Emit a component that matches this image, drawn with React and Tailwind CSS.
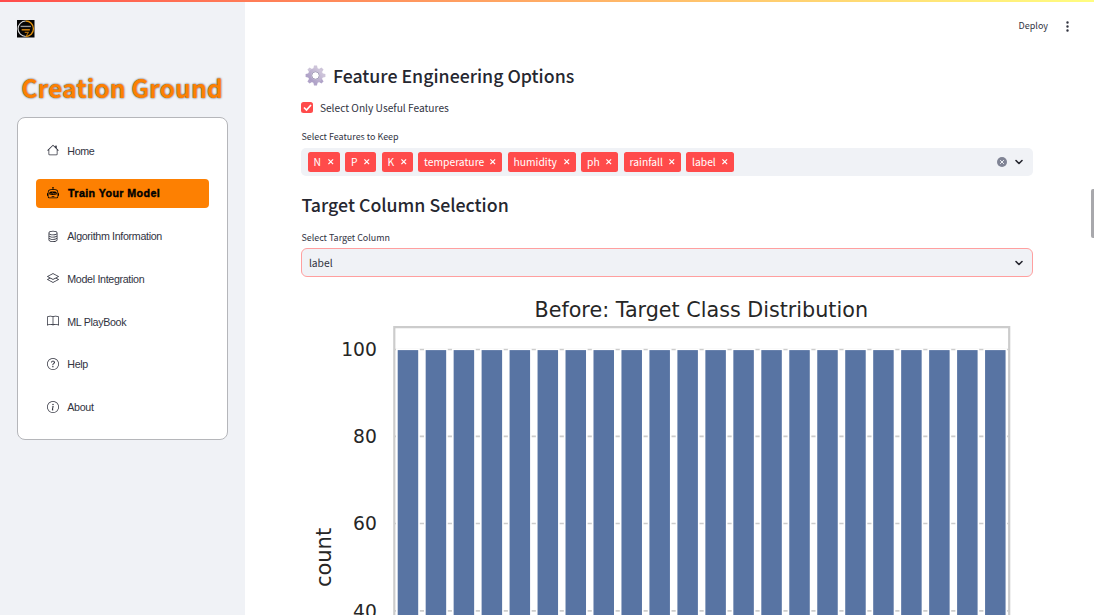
import React from "react";
import { BsHouse, BsRobot, BsDatabase, BsLayers, BsBook, BsQuestionCircle, BsInfoCircle, BsThreeDotsVertical } from "react-icons/bs";

const NAV = [
  { label: "Home", Icon: BsHouse },
  { label: "Train Your Model", Icon: BsRobot, active: true },
  { label: "Algorithm Information", Icon: BsDatabase },
  { label: "Model Integration", Icon: BsLayers },
  { label: "ML PlayBook", Icon: BsBook },
  { label: "Help", Icon: BsQuestionCircle },
  { label: "About", Icon: BsInfoCircle },
];

const FEATURES = [
  { name: "N", width: "w-[32px]" },
  { name: "P", width: "w-[31px]" },
  { name: "K", width: "w-[31px]" },
  { name: "temperature", width: "w-[84px]" },
  { name: "humidity", width: "w-[68px]" },
  { name: "ph", width: "w-[37px]" },
  { name: "rainfall", width: "w-[57px]" },
  { name: "label", width: "w-[48px]" },
];

function Logo() {
  return (
    <svg className="size-[17.500px]" viewBox="0 0 34 34">
      <rect width="34" height="34" fill="#050505" />
      <path d="M17 2a15 15 0 0 0 0 30" fill="none" stroke="#d6d6d6" strokeWidth="2.200" />
      <path d="M17 2a15 15 0 0 1 0 30" fill="none" stroke="#e0920f" strokeWidth="2.600" />
      <path d="M7 12.500h20" stroke="#999999" strokeWidth="2.600" />
      <path d="M9 19h16" stroke="#c57a0c" strokeWidth="3.200" />
      <path d="M15 24h7l-4 7" fill="none" stroke="#a8690c" strokeWidth="2.200" />
    </svg>
  );
}

function Gear() {
  const teeth = [0, 45, 90, 135, 180, 225, 270, 315];
  return (
    <svg className="size-[21px]" viewBox="-12 -12 24 24">
      <defs>
        <linearGradient id="gear" x1="1" y1="0" x2="0" y2="1">
          <stop offset="0" stopColor="#d3cadd" />
          <stop offset="1" stopColor="#a99bc4" />
        </linearGradient>
      </defs>
      {teeth.map((a) => (
        <path key={a} d="M-2.600-7.500L-1.700-11.300h3.400L2.600-7.500z" fill={a > 90 && a < 300 ? "#b0a3c8" : "#cdc4d9"} transform={`rotate(${a})`} />
      ))}
      <circle r="6.600" fill="none" stroke="url(#gear)" strokeWidth="4" />
      <circle r="4.300" fill="none" stroke="#948bab" strokeWidth="1" />
    </svg>
  );
}

function Chevron() {
  return (
    <svg className="size-[8px]" viewBox="0 0 8 8" fill="none" stroke="#262730" strokeWidth="1.600" strokeLinecap="round" strokeLinejoin="round">
      <path d="M1 2.500L4 5.500L7 2.500" />
    </svg>
  );
}

function Cross({ className }) {
  return (
    <svg className={className} viewBox="0 0 8 8" fill="none" stroke="currentColor" strokeWidth="1.300">
      <path d="M1.500 1.500L6.500 6.500M6.500 1.500L1.500 6.500" />
    </svg>
  );
}

function Chart() {
  const bars = Array.from({ length: 22 }, (_, i) => 96.2 + i * 27.97);
  const ticks = [
    { value: 100, y: 59.5 },
    { value: 80, y: 146.300 },
    { value: 60, y: 233.500 },
    { value: 40, y: 320.800 },
  ];
  return (
    <svg className="block h-[325px] w-[732px] shrink-0" viewBox="-0.5 0 732 325" fontFamily="DejaVu Sans" fill="#262626">
      <text x="233" y="27" fontSize="21" textLength="333.500" lengthAdjust="spacingAndGlyphs">Before: Target Class Distribution</text>
      <text x="29.300" y="267.500" fontSize="21" textAnchor="middle" transform="rotate(-90 29.3 267.5)">count</text>
      {ticks.map((t) => (
        <g key={t.value}>
          <text x="75.300" y={t.y + 6.900} fontSize="18.700" textAnchor="end">{t.value}</text>
          <path d={`M93 ${t.y}H707`} stroke="#cccccc" strokeWidth="1.700" />
        </g>
      ))}
      {bars.map((x) => (
        <g key={x}>
          <rect x={x - 1.7} y="58.400" width="23.800" height="280" fill="#ffffff" />
          <rect x={x} y="60.100" width="20.500" height="280" fill="#5874a3" />
        </g>
      ))}
      <path d="M92.800 340V37.100H707.700V340" fill="none" stroke="#cccccc" strokeWidth="2.200" />
    </svg>
  );
}

export default function App() {
  return (
    <div className="relative flex h-[615px] w-[1094px] overflow-hidden bg-white font-['Noto_Sans_CJK_SC',sans-serif] text-[#31333f]">
      <div className="absolute inset-x-0 top-0 h-[2px] bg-linear-to-r from-[#ff4b4b] to-[#fffd80]" />
      <aside className="flex w-[245px] shrink-0 flex-col bg-[#f0f2f6] pl-[17px] pt-[20px]">
        <Logo />
        <h1 className="mt-[29.500px] h-[40px] w-[210px] whitespace-nowrap text-center text-[24.800px] font-bold leading-[40px] text-[#fc8003] [text-shadow:0_0_2px_#333]">
          Creation Ground
        </h1>
        <nav className="mt-[9.500px] flex h-[323px] w-[210.500px] flex-col gap-[14.100px] rounded-[8px] border border-[#b5b6ba] bg-white px-[18px] pt-[18.700px] font-['Liberation_Sans',sans-serif]">
          {NAV.map(({ label, Icon, active }) => (
            <a
              key={label}
              className={
                active
                  ? "flex h-[28.700px] shrink-0 items-center gap-[9px] rounded-[4px] bg-[#fd8002] pl-[11px] text-[10.700px] font-black tracking-[0.400px] text-black [-webkit-text-stroke:0.400px_black]"
                  : "flex h-[28.700px] shrink-0 items-center gap-[8.300px] pl-[11px] text-[10.700px] tracking-[-0.330px] text-[#31333f]"
              }
            >
              <Icon className="-mt-[1px] size-[12px]" />
              <span className="whitespace-nowrap">{label}</span>
            </a>
          ))}
        </nav>
      </aside>
      <main className="flex min-w-0 flex-1 flex-col">
        <header className="flex h-[52px] shrink-0 items-center justify-end pr-[20px] text-[9px]">
          <span className="-mt-[1px]">Deploy</span>
          <BsThreeDotsVertical className="ml-[13px] size-[13px]" />
        </header>
        <div className="flex w-[788.400px] flex-col pl-[56.400px]">
          <div className="mt-[8px] flex h-[30px] items-center gap-[6.500px] pl-[4px]">
            <Gear />
            <h2 className="whitespace-nowrap text-[17.750px] font-medium text-[#262730]">Feature Engineering Options</h2>
          </div>
          <label className="mt-[9px] flex h-[18px] items-center gap-[7px] text-[10.200px]">
            <span className="-mt-[1px] flex size-[11.500px] items-center justify-center rounded-[2.500px] bg-[#ff4b4b]">
              <svg className="size-[9px]" viewBox="0 0 9 9" fill="none" stroke="white" strokeWidth="1.700">
                <path d="M1 4.500L3.500 7L8 2" />
              </svg>
            </span>
            <span>Select Only Useful Features</span>
          </label>
          <p className="mt-[11px] h-[18px] text-[8.950px] leading-[18px]">Select Features to Keep</p>
          <div className="mt-[2px] flex h-[28px] items-center gap-[5.500px] rounded-[5px] bg-[#f0f2f6] pl-[6.200px] pr-[10.200px]">
            {FEATURES.map(({ name, width }) => (
              <span key={name} className={`flex h-[20px] shrink-0 items-center justify-between rounded-[2.500px] bg-[#ff4b4b] pl-[6px] pr-[5.500px] text-[10.300px] text-white ${width}`}>
                {name}
                <Cross className="size-[7.500px]" />
              </span>
            ))}
            <span className="ml-auto flex size-[10px] items-center justify-center rounded-full bg-[#808495] text-[#f0f2f6]">
              <Cross className="size-[6px]" />
            </span>
            <span className="ml-[3px]"><Chevron /></span>
          </div>
          <h2 className="mt-[13px] h-[30px] whitespace-nowrap text-[17.750px] font-medium leading-[30px] text-[#262730]">Target Column Selection</h2>
          <p className="mt-[10px] h-[18px] text-[8.950px] leading-[18px]">Select Target Column</p>
          <div className="mt-[1px] flex h-[29px] items-center justify-between rounded-[6px] border border-[#ff9f9f] bg-[#f0f2f6] pl-[6.500px] pr-[9.500px] text-[10.300px]">
            <span>label</span>
            <Chevron />
          </div>
          <div className="mt-[13px]"><Chart /></div>
        </div>
      </main>
      <div className="absolute right-0 top-[189px] h-[49px] w-[3.500px] rounded-l-[2px] bg-[#a8a8ac]" />
    </div>
  );
}
